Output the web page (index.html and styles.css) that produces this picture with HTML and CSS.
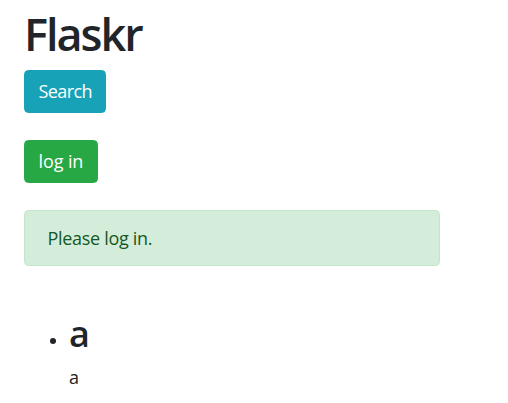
FILE: index.html
```html
<!DOCTYPE html>
<html lang="en">
<head>
<meta charset="utf-8">
<title>Flaskr</title>
<link rel="stylesheet" href="styles.css">
</head>
<body>
<div class="container">
  <h1 class="title">Flaskr</h1>
  <form class="form"><button type="button" class="btn btn-info">Search</button></form>
  <form class="form"><button type="button" class="btn btn-success">log in</button></form>
  <div class="alert">Please log in.</div>
  <ul class="entries">
    <li><h2 class="entry-title">a</h2><p class="entry-text">a</p></li>
  </ul>
</div>
</body>
</html>
```
FILE: styles.css
```css
html { font-size: 18px; }
body {
  margin: 0;
  font-family: "Open Sans", "Noto Sans", sans-serif;
  font-size: 1rem;
  line-height: 1.5;
  color: #212529;
  background: #fff;
}
.container {
  padding: 7px 24px 0 24px;
  width: 416px;
}
.title {
  margin: 0 0 9px 0;
  font-size: 45px;
  font-weight: 600;
  line-height: 1.2;
  letter-spacing: -2px;
}
.form { margin: 0 0 27px 0; }
.btn {
  display: inline-block;
  font-family: inherit;
  font-size: 18px;
  line-height: 27px;
  padding: 7px 13.5px;
  border: 1px solid transparent;
  border-radius: 4.5px;
  color: #fff;
  cursor: pointer;
}
.btn-info { background: #17a2b8; border-color: #17a2b8; letter-spacing: -0.6px; }
.btn-success { background: #28a745; border-color: #28a745; letter-spacing: -0.1px; }
.alert {
  padding: 13.5px 22.5px;
  border: 1px solid #c3e6cb;
  border-radius: 4.5px;
  background: #d4edda;
  color: #155724;
  margin-bottom: 18px;
  letter-spacing: -0.3px;
}
.entries {
  margin: 0;
  padding: 28px 0 0 45px;
}
.entry-title {
  margin: 0 0 9px 0;
  font-size: 36px;
  font-weight: 600;
  line-height: 1.2;
}
.entry-text { margin: 0; }
```
